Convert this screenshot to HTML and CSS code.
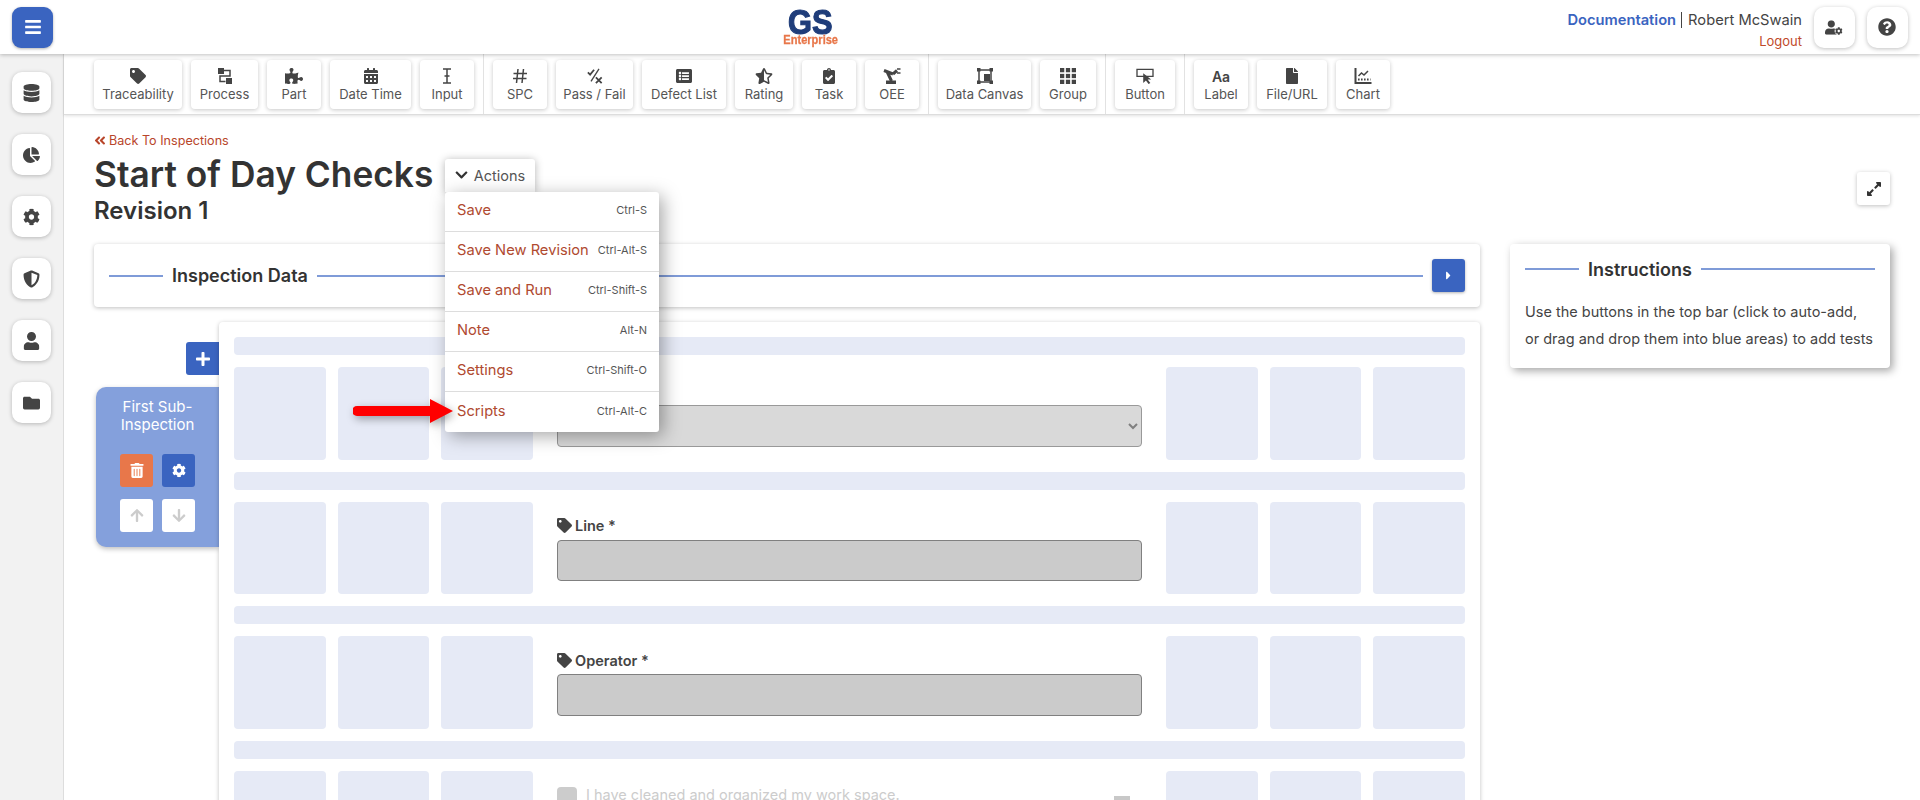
FILE: index.html
```html
<!DOCTYPE html>
<html>
  <head>
    <title>Start of Day Checks</title>
    <link rel="stylesheet" href="styles.css">
  </head>
  <body>
    <svg class="sprite" xmlns="http://www.w3.org/2000/svg">
      <symbol id="i-tag" viewBox="0 0 512 512"><path d="M0 252.118V48C0 21.49 21.49 0 48 0h204.118a48 48 0 0 1 33.941 14.059l211.882 211.882c18.745 18.745 18.745 49.137 0 67.882L293.823 497.941c-18.745 18.745-49.137 18.745-67.882 0L14.059 286.059A48 48 0 0 1 0 252.118zM112 64c-26.51 0-48 21.49-48 48s21.49 48 48 48 48-21.49 48-48-21.49-48-48-48z"/></symbol>
      <symbol id="i-cog" viewBox="0 0 512 512"><path d="M487.4 315.7l-42.6-24.6c4.3-23.2 4.3-47 0-70.2l42.6-24.6c4.9-2.8 7.1-8.6 5.5-14-11.1-35.6-30-67.8-54.7-94.6-3.8-4.1-10-5.1-14.8-2.3L380.8 110c-17.9-15.4-38.5-27.3-60.8-35.1V25.8c0-5.6-3.9-10.5-9.4-11.7-36.7-8.2-74.3-7.8-109.2 0-5.5 1.2-9.4 6.1-9.4 11.7V75c-22.2 7.9-42.8 19.8-60.8 35.1L88.7 85.5c-4.9-2.8-11-1.9-14.8 2.3-24.7 26.7-43.6 58.9-54.7 94.6-1.7 5.4.6 11.2 5.5 14L67.3 221c-4.3 23.2-4.3 47 0 70.2l-42.6 24.6c-4.9 2.8-7.1 8.6-5.5 14 11.1 35.6 30 67.8 54.7 94.6 3.8 4.1 10 5.1 14.8 2.3l42.6-24.6c17.9 15.4 38.5 27.3 60.8 35.1v49.2c0 5.6 3.9 10.5 9.4 11.7 36.7 8.2 74.3 7.8 109.2 0 5.5-1.2 9.4-6.1 9.4-11.7v-49.2c22.2-7.9 42.8-19.8 60.8-35.1l42.6 24.6c4.9 2.8 11 1.9 14.8-2.3 24.7-26.7 43.6-58.9 54.7-94.6 1.5-5.5-.7-11.3-5.6-14.1zM256 336c-44.1 0-80-35.9-80-80s35.9-80 80-80 80 35.9 80 80-35.9 80-80 80z"/></symbol>
      <symbol id="i-user" viewBox="0 0 448 512"><path d="M224 256c70.7 0 128-57.3 128-128S294.7 0 224 0 96 57.3 96 128s57.3 128 128 128zm89.6 32h-16.7c-22.2 10.2-46.9 16-72.9 16s-50.6-5.8-72.9-16h-16.7C60.2 288 0 348.2 0 422.4V464c0 26.5 21.5 48 48 48h352c26.5 0 48-21.5 48-48v-41.6c0-74.2-60.2-134.4-134.4-134.4z"/></symbol>
    </svg>

    <header class="topbar">
      <button class="menu-button">
        <svg viewBox="0 0 448 512"><path d="M16 132h416c8.837 0 16-7.163 16-16V76c0-8.837-7.163-16-16-16H16C7.163 60 0 67.163 0 76v40c0 8.837 7.163 16 16 16zm0 160h416c8.837 0 16-7.163 16-16v-40c0-8.837-7.163-16-16-16H16c-8.837 0-16 7.163-16 16v40c0 8.837 7.163 16 16 16zm0 160h416c8.837 0 16-7.163 16-16v-40c0-8.837-7.163-16-16-16H16c-8.837 0-16 7.163-16 16v40c0 8.837 7.163 16 16 16z"/></svg>
      </button>
      <div class="logo">
        <span class="logo-gs">GS</span>
        <span class="logo-sub">Enterprise</span>
      </div>
      <div class="account">
        <div class="account-text">
          <p class="account-name"><a class="doc-link">Documentation</a><span class="pipe"></span>Robert McSwain</p>
          <a class="logout">Logout</a>
        </div>
        <button class="round-button">
          <svg class="icon-usercog" viewBox="0 0 640 512"><use href="#i-user" width="448" height="512"/><g class="cog-ring"><circle cx="490" cy="380" r="150"/></g><use href="#i-cog" x="350" y="240" width="280" height="280"/></svg>
        </button>
        <button class="round-button">
          <svg class="icon-help" viewBox="0 0 512 512"><path d="M504 256c0 136.997-111.043 248-248 248S8 392.997 8 256C8 119.083 119.043 8 256 8s248 111.083 248 248zM262.655 90c-54.497 0-89.255 22.957-116.549 63.758-3.536 5.286-2.353 12.415 2.715 16.258l34.699 26.31c5.205 3.947 12.621 3.008 16.665-2.122 17.864-22.658 30.113-35.797 57.303-35.797 20.429 0 45.698 13.148 45.698 32.958 0 14.976-12.363 22.667-32.534 33.976C247.128 238.528 216 254.941 216 296v4c0 6.627 5.373 12 12 12h56c6.627 0 12-5.373 12-12v-1.333c0-28.462 83.186-29.647 83.186-106.667 0-58.002-60.165-102-116.531-102zM256 338c-25.365 0-46 20.635-46 46 0 25.364 20.635 46 46 46s46-20.636 46-46c0-25.365-20.635-46-46-46z"/></svg>
        </button>
      </div>
    </header>

    <div class="layout">
      <nav class="sidebar">
        <button class="side-button"><svg viewBox="0 0 448 512"><path d="M448 73.143v45.714C448 159.143 347.667 192 224 192S0 159.143 0 118.857V73.143C0 32.857 100.333 0 224 0s224 32.857 224 73.143zM448 176v102.857C448 319.143 347.667 352 224 352S0 319.143 0 278.857V176c48.125 33.143 136.208 48.572 224 48.572S399.874 209.143 448 176zm0 160v102.857C448 479.143 347.667 512 224 512S0 479.143 0 438.857V336c48.125 33.143 136.208 48.572 224 48.572S399.874 369.143 448 336z"/></svg></button>
        <button class="side-button"><svg viewBox="0 0 544 512"><path d="M527.79 288H290.5l158.03 158.03c6.04 6.04 15.98 6.53 22.19.68 38.7-36.46 65.32-85.61 73.13-140.86 1.34-9.46-6.51-17.85-16.06-17.85zm-15.83-64.8C503.72 103.74 408.26 8.28 288.8.04 279.68-.59 272 7.1 272 16.24V240h223.77c9.14 0 16.82-7.68 16.19-16.8zM224 288V50.71c0-9.55-8.39-17.4-17.84-16.06C86.99 51.49-4.1 155.6.14 280.37 4.5 408.51 114.83 513.59 243.03 511.98c50.4-.63 96.97-16.87 135.26-44.03 7.9-5.6 8.42-17.23 1.57-24.08L224 288z"/></svg></button>
        <button class="side-button"><svg viewBox="0 0 512 512"><use href="#i-cog"/></svg></button>
        <button class="side-button"><svg viewBox="0 0 512 512"><path d="M466.5 83.7l-192-80a48.15 48.15 0 0 0-36.9 0l-192 80C27.7 91.1 16 108.6 16 128c0 198.5 114.5 335.7 221.5 380.3 11.8 4.9 25.1 4.9 36.9 0C360.1 472.6 496 349.3 496 128c0-19.4-11.7-36.9-29.5-44.3zM256.1 446.3l-.1-381 175.9 73.3c-3.3 151.4-82.1 261.1-175.8 307.7z"/></svg></button>
        <button class="side-button"><svg viewBox="0 0 448 512"><use href="#i-user"/></svg></button>
        <button class="side-button"><svg viewBox="0 0 512 512"><path d="M464 128H272l-64-64H48C21.49 64 0 85.49 0 112v288c0 26.51 21.49 48 48 48h416c26.51 0 48-21.49 48-48V176c0-26.51-21.49-48-48-48z"/></svg></button>
      </nav>

      <main class="main">
        <div class="toolbar">
          <div class="tool-group">
            <button class="tool tool-88"><svg viewBox="0 0 512 512"><use href="#i-tag"/></svg>Traceability</button>
            <button class="tool tool-67"><svg viewBox="0 0 14 16"><rect x="0" y="0" width="6" height="6"/><rect x="8" y="10" width="6" height="6"/><path class="line" d="M6 2.5h6v5.5H2v5.5h5.5"/></svg>Process</button>
            <button class="tool tool-54"><svg viewBox="0 0 576 512"><path d="M519.442 288.651c-41.519 0-59.5 31.593-82.058 31.593C377.409 320.244 432 144 432 144s-196.288 80-196.288-3.297c0-35.827 36.288-46.25 36.288-85.985C272 19.216 243.885 0 210.539 0c-34.654 0-66.366 18.891-66.366 56.346 0 41.364 31.711 59.277 31.711 81.75C175.885 207.719 0 166.758 0 166.758v333.237s178.635 41.047 178.635-28.662c0-22.473-40-40.107-40-81.471 0-37.456 29.25-56.346 63.577-56.346 33.673 0 61.788 19.216 61.788 54.717 0 39.735-36.288 50.158-36.288 85.985 0 60.803 129.675 25.73 181.23 25.73 0 0-34.725-120.101 25.827-120.101 35.962 0 46.423 36.152 86.308 36.152C556.712 416 576 387.99 576 354.443c0-34.199-18.962-65.792-56.558-65.792z"/></svg>Part</button>
            <button class="tool tool-81"><svg viewBox="0 0 448 512"><path d="M0 464c0 26.5 21.5 48 48 48h352c26.5 0 48-21.5 48-48V192H0v272zm320-196c0-6.6 5.4-12 12-12h40c6.6 0 12 5.4 12 12v40c0 6.6-5.4 12-12 12h-40c-6.6 0-12-5.4-12-12v-40zm0 128c0-6.6 5.4-12 12-12h40c6.6 0 12 5.4 12 12v40c0 6.6-5.4 12-12 12h-40c-6.6 0-12-5.4-12-12v-40zM192 268c0-6.6 5.4-12 12-12h40c6.6 0 12 5.4 12 12v40c0 6.6-5.4 12-12 12h-40c-6.6 0-12-5.4-12-12v-40zm0 128c0-6.6 5.4-12 12-12h40c6.6 0 12 5.4 12 12v40c0 6.6-5.4 12-12 12h-40c-6.6 0-12-5.4-12-12v-40zM64 268c0-6.6 5.4-12 12-12h40c6.6 0 12 5.4 12 12v40c0 6.6-5.4 12-12 12H76c-6.6 0-12-5.4-12-12v-40zm0 128c0-6.6 5.4-12 12-12h40c6.6 0 12 5.4 12 12v40c0 6.6-5.4 12-12 12H76c-6.6 0-12-5.4-12-12v-40zM400 64h-48V16c0-8.8-7.2-16-16-16h-32c-8.8 0-16 7.2-16 16v48H160V16c0-8.8-7.2-16-16-16h-32c-8.8 0-16 7.2-16 16v48H48C21.5 64 0 85.5 0 112v48h448v-48c0-26.5-21.5-48-48-48z"/></svg>Date Time</button>
            <button class="tool tool-54"><svg viewBox="0 0 14 16"><path class="line" d="M3 1h8M3 15h8M7 1v14M4.5 8h5"/></svg>Input</button>
          </div>
          <div class="tool-group">
            <button class="tool tool-54"><svg viewBox="0 0 16 16"><path class="line" d="M6 1L4.5 15M11.5 1L10 15M1.5 5.5H15M1 10.5H14.5"/></svg>SPC</button>
            <button class="tool tool-77"><svg viewBox="0 0 18 18"><path class="line-bold" d="M1 5l2.5 2.5L8 2M10 10.5l6.5 6.5M16.5 10.5L10 17"/><path class="line" d="M13.5 1L4.5 15"/></svg>Pass / Fail</button>
            <button class="tool tool-84"><svg viewBox="0 0 512 512"><path d="M464 480H48c-26.51 0-48-21.49-48-48V80c0-26.51 21.49-48 48-48h416c26.51 0 48 21.49 48 48v352c0 26.51-21.49 48-48 48zM128 120c-22.091 0-40 17.909-40 40s17.909 40 40 40 40-17.909 40-40-17.909-40-40-40zm0 96c-22.091 0-40 17.909-40 40s17.909 40 40 40 40-17.909 40-40-17.909-40-40-40zm0 96c-22.091 0-40 17.909-40 40s17.909 40 40 40 40-17.909 40-40-17.909-40-40-40zm288-136v-32c0-6.627-5.373-12-12-12H204c-6.627 0-12 5.373-12 12v32c0 6.627 5.373 12 12 12h200c6.627 0 12-5.373 12-12zm0 96v-32c0-6.627-5.373-12-12-12H204c-6.627 0-12 5.373-12 12v32c0 6.627 5.373 12 12 12h200c6.627 0 12-5.373 12-12zm0 96v-32c0-6.627-5.373-12-12-12H204c-6.627 0-12 5.373-12 12v32c0 6.627 5.373 12 12 12h200c6.627 0 12-5.373 12-12z"/></svg>Defect List</button>
            <button class="tool tool-58"><svg viewBox="0 0 536 512"><path d="M508.55 171.51L362.18 150.2 296.77 17.81C290.89 5.98 279.42 0 267.95 0c-11.4 0-22.79 5.9-28.69 17.81l-65.43 132.38-146.38 21.29c-26.25 3.8-36.77 36.09-17.74 54.59l105.89 103-25.06 145.48C86.98 495.33 103.57 512 122.15 512c4.93 0 10-1.17 14.87-3.75l130.95-68.68 130.94 68.7c4.86 2.55 9.92 3.71 14.83 3.71 18.6 0 35.22-16.61 31.66-37.4l-25.03-145.49 105.91-102.98c19.04-18.5 8.52-50.8-17.73-54.6zm-121.74 123.2l-18.12 17.62 4.28 24.88 19.52 113.45-102.13-53.59-22.38-11.74.03-317.19 51.03 103.29 11.18 22.63 25.01 3.64 114.23 16.63-82.65 80.38z"/></svg>Rating</button>
            <button class="tool tool-54"><svg viewBox="0 0 384 512"><path d="M336 64h-80c0-35.3-28.7-64-64-64s-64 28.7-64 64H48C21.5 64 0 85.5 0 112v352c0 26.5 21.5 48 48 48h288c26.5 0 48-21.5 48-48V112c0-26.5-21.5-48-48-48zM192 40c13.3 0 24 10.7 24 24s-10.7 24-24 24-24-10.7-24-24 10.7-24 24-24zm121.2 231.8l-143 141.8c-4.7 4.7-12.3 4.6-17-.1l-82.6-83.3c-4.7-4.7-4.6-12.3.1-17L99.1 285c4.7-4.7 12.3-4.6 17 .1l46 46.4 106-105.2c4.7-4.7 12.3-4.6 17 .1l28.2 28.4c4.7 4.8 4.6 12.3-.1 17z"/></svg>Task</button>
            <button class="tool tool-54"><svg viewBox="0 0 18 16"><rect x="3" y="12.5" width="10" height="3.5"/><path class="line-heavy" d="M1 2.5L10 6M4 3.5L8.5 13M10 6l4-3.5"/><path class="line" d="M14 1h3.5M14 5h3.5"/></svg>OEE</button>
          </div>
          <div class="tool-group">
            <button class="tool tool-93"><svg viewBox="0 0 16 16"><path class="line" d="M2 2h12v12H2z"/><rect x="0" y="0" width="3.5" height="3.5"/><rect x="12.5" y="0" width="3.5" height="3.5"/><rect x="0" y="12.5" width="3.5" height="3.5"/><rect x="12.5" y="12.5" width="3.5" height="3.5"/><rect x="7" y="6" width="6" height="7"/></svg>Data Canvas</button>
            <button class="tool tool-56"><svg viewBox="0 0 15 15"><rect x="0" y="0" width="4" height="4"/><rect x="5.5" y="0" width="4" height="4"/><rect x="11" y="0" width="4" height="4"/><rect x="0" y="5.5" width="4" height="4"/><rect x="5.5" y="5.5" width="4" height="4"/><rect x="11" y="5.5" width="4" height="4"/><rect x="0" y="11" width="4" height="4"/><rect x="5.5" y="11" width="4" height="4"/><rect x="11" y="11" width="4" height="4"/></svg>Group</button>
          </div>
          <div class="tool-group">
            <button class="tool tool-60"><svg viewBox="0 0 20 18"><path class="line" d="M1 1.5h18v8H1z"/><path d="M8 6v11l3-3 3 4 2-1-3-4h4z"/></svg>Button</button>
          </div>
          <div class="tool-group">
            <button class="tool tool-54"><span class="aa">Aa</span>Label</button>
            <button class="tool tool-70"><svg viewBox="0 0 384 512"><path d="M224 136V0H24C10.7 0 0 10.7 0 24v464c0 13.3 10.7 24 24 24h336c13.3 0 24-10.7 24-24V160H248c-13.2 0-24-10.8-24-24zm160-14.1v6.1H256V0h6.1c6.4 0 12.5 2.5 17 7l97.9 98c4.5 4.5 7 10.6 7 16.9z"/></svg>File/URL</button>
            <button class="tool tool-54"><svg viewBox="0 0 17 16"><path class="line-bold" d="M1 0v15h16"/><path class="line" d="M4 8l3-3 2.5 2 4-4"/><path class="line-dots" d="M3.5 11.5H16"/></svg>Chart</button>
          </div>
        </div>

        <div class="content">
          <div class="page-head">
            <div>
              <a class="back-link"><svg viewBox="0 0 448 512"><path d="M223.7 239l136-136c9.4-9.4 24.6-9.4 33.9 0l22.6 22.6c9.4 9.4 9.4 24.6 0 33.9L319.9 256l96.4 96.4c9.4 9.4 9.4 24.6 0 33.9L393.7 409c-9.4 9.4-24.6 9.4-33.9 0l-136-136c-9.5-9.4-9.5-24.6-.1-34zm-192 34l136 136c9.4 9.4 24.6 9.4 33.9 0l22.6-22.6c9.4-9.4 9.4-24.6 0-33.9L127.9 256l96.4-96.4c9.4-9.4 9.4-24.6 0-33.9L201.7 103c-9.4-9.4-24.6-9.4-33.9 0l-136 136c-9.5 9.4-9.5 24.6-.1 34z"/></svg>Back To Inspections</a>
              <div class="title-row">
                <h1>Start of Day Checks</h1>
                <div class="actions">
                  <button class="actions-button"><svg viewBox="0 0 448 512"><path d="M207.029 381.476L12.686 187.132c-9.373-9.373-9.373-24.569 0-33.941l22.667-22.667c9.357-9.357 24.522-9.375 33.901-.04L224 284.505l154.745-154.021c9.379-9.335 24.544-9.317 33.901.04l22.667 22.667c9.373 9.373 9.373 24.569 0 33.941L240.971 381.476c-9.373 9.372-24.569 9.372-33.942 0z"/></svg>Actions</button>
                  <ul class="actions-menu">
                    <li><span>Save</span><small>Ctrl-S</small></li>
                    <li><span>Save New Revision</span><small>Ctrl-Alt-S</small></li>
                    <li><span>Save and Run</span><small>Ctrl-Shift-S</small></li>
                    <li><span>Note</span><small>Alt-N</small></li>
                    <li><span>Settings</span><small>Ctrl-Shift-O</small></li>
                    <li><span>Scripts</span><small>Ctrl-Alt-C</small></li>
                  </ul>
                </div>
              </div>
              <h2>Revision 1</h2>
            </div>
            <button class="expand-button"><svg viewBox="0 0 448 512"><path d="M212.686 315.314L120 408l32.922 31.029c15.12 15.12 4.412 40.971-16.97 40.971h-112C10.697 480 0 469.255 0 456V344c0-21.382 25.803-32.09 40.922-16.971L72 360l92.686-92.686c6.248-6.248 16.379-6.248 22.627 0l25.373 25.373c6.249 6.248 6.249 16.378 0 22.627zm22.628-118.628L328 104l-32.922-31.029C279.958 57.851 290.666 32 312.048 32h112C437.303 32 448 42.745 448 56v112c0 21.382-25.803 32.09-40.922 16.971L376 152l-92.686 92.686c-6.248 6.248-16.379 6.248-22.627 0l-25.373-25.373c-6.249-6.248-6.249-16.378 0-22.627z"/></svg></button>
          </div>

          <div class="columns">
            <div>
              <section class="card data-card">
                <div class="rule-title"><span>Inspection Data</span></div>
                <button class="next-button"><svg viewBox="0 0 192 512"><path d="M0 384.662V127.338c0-17.818 21.543-26.741 34.142-14.142l128.662 128.662c7.81 7.81 7.81 20.474 0 28.284L34.142 398.804C21.543 411.404 0 402.48 0 384.662z"/></svg></button>
              </section>

              <div class="builder">
                <aside class="sub-tabs">
                  <button class="add-tab"><svg viewBox="0 0 448 512"><path d="M416 208H272V64c0-17.67-14.33-32-32-32h-32c-17.67 0-32 14.33-32 32v144H32c-17.67 0-32 14.33-32 32v32c0 17.67 14.33 32 32 32h144v144c0 17.67 14.33 32 32 32h32c17.67 0 32-14.33 32-32V304h144c17.67 0 32-14.33 32-32v-32c0-17.67-14.33-32-32-32z"/></svg></button>
                  <div class="sub-tile">
                    <p>First Sub-<br>Inspection</p>
                    <div class="tile-buttons">
                      <button class="tile-button orange"><svg viewBox="0 0 448 512"><path d="M32 464a48 48 0 0 0 48 48h288a48 48 0 0 0 48-48V128H32zm272-256a16 16 0 0 1 32 0v224a16 16 0 0 1-32 0zm-96 0a16 16 0 0 1 32 0v224a16 16 0 0 1-32 0zm-96 0a16 16 0 0 1 32 0v224a16 16 0 0 1-32 0zM432 32H312l-9.4-18.7A24 24 0 0 0 281.1 0H166.8a23.72 23.72 0 0 0-21.4 13.3L136 32H16A16 16 0 0 0 0 48v32a16 16 0 0 0 16 16h416a16 16 0 0 0 16-16V48a16 16 0 0 0-16-16z"/></svg></button>
                      <button class="tile-button blue"><svg viewBox="0 0 512 512"><use href="#i-cog"/></svg></button>
                      <button class="tile-button plain"><svg viewBox="0 0 448 512"><path d="M34.9 289.5l-22.2-22.2c-9.4-9.4-9.4-24.6 0-33.9L207 39c9.4-9.4 24.6-9.4 33.9 0l194.3 194.3c9.4 9.4 9.4 24.6 0 33.9L413 289.4c-9.5 9.5-25 9.3-34.3-.4L264 168.6V456c0 13.3-10.7 24-24 24h-32c-13.3 0-24-10.7-24-24V168.6L69.2 289.1c-9.3 9.8-24.8 10-34.3.4z"/></svg></button>
                      <button class="tile-button plain"><svg viewBox="0 0 448 512"><path d="M413.1 222.5l22.2 22.2c9.4 9.4 9.4 24.6 0 33.9L241 473c-9.4 9.4-24.6 9.4-33.9 0L12.7 278.6c-9.4-9.4-9.4-24.6 0-33.9l22.2-22.2c9.5-9.5 25-9.3 34.3.4L184 343.4V56c0-13.3 10.7-24 24-24h32c13.3 0 24 10.7 24 24v287.4l114.8-120.5c9.3-9.8 24.8-10 34.3-.4z"/></svg></button>
                    </div>
                  </div>
                </aside>

                <section class="card canvas">
                  <div class="strip"></div>
                  <div class="zone-row">
                    <div class="zone"></div><div class="zone"></div><div class="zone"></div>
                    <div class="field">
                      <label><svg viewBox="0 0 512 512"><use href="#i-tag"/></svg>Part *</label>
                      <select class="field-select" disabled><option></option></select>
                    </div>
                    <div class="zone"></div><div class="zone"></div><div class="zone"></div>
                  </div>
                  <div class="strip"></div>
                  <div class="zone-row">
                    <div class="zone"></div><div class="zone"></div><div class="zone"></div>
                    <div class="field">
                      <label><svg viewBox="0 0 512 512"><use href="#i-tag"/></svg>Line *</label>
                      <input class="field-input" type="text" disabled>
                    </div>
                    <div class="zone"></div><div class="zone"></div><div class="zone"></div>
                  </div>
                  <div class="strip"></div>
                  <div class="zone-row">
                    <div class="zone"></div><div class="zone"></div><div class="zone"></div>
                    <div class="field">
                      <label><svg viewBox="0 0 512 512"><use href="#i-tag"/></svg>Operator *</label>
                      <input class="field-input" type="text" disabled>
                    </div>
                    <div class="zone"></div><div class="zone"></div><div class="zone"></div>
                  </div>
                  <div class="strip"></div>
                  <div class="zone-row">
                    <div class="zone"></div><div class="zone"></div><div class="zone"></div>
                    <div class="field">
                      <div class="check-row">
                        <span class="check-box"></span>
                        <span class="check-text">I have cleaned and organized my work space.</span>
                        <span class="check-mark"></span>
                      </div>
                    </div>
                    <div class="zone"></div><div class="zone"></div><div class="zone"></div>
                  </div>
                </section>
              </div>
            </div>

            <aside class="card instructions">
              <div class="rule-title"><span>Instructions</span></div>
              <p>Use the buttons in the top bar (click to auto-add,<br>or drag and drop them into blue areas) to add tests</p>
            </aside>
          </div>
        </div>
      </main>
    </div>

    <!-- red arrow pointing at the Scripts entry -->
    <svg class="callout" viewBox="0 0 100 24"><path d="M4 7h73V0l23 12-23 12v-7H4a5 5 0 0 1 0-10z"/></svg>
  </body>
</html>
```

FILE: styles.css
```css
* {
  box-sizing: border-box;
}

html,
body {
  height: 800px;
  overflow: hidden;
}

body {
  margin: 0;
  background-color: #fff;
  color: #333;
  font-family: Inter, "Liberation Sans", sans-serif;
}

button {
  font-family: inherit;
  border: none;
  padding: 0;
  cursor: pointer;
}

svg {
  fill: currentColor;
  display: block;
}

p,
h1,
h2,
ul {
  margin: 0;
  padding: 0;
}

.sprite {
  display: none;
}

/* Top bar */
.topbar {
  position: relative;
  z-index: 3;
  height: 54px;
  display: flex;
  align-items: center;
  justify-content: space-between;
  padding: 0 12px;
  background-color: #fff;
  box-shadow: 0 1px 4px rgba(0, 0, 0, 0.25);
}

.menu-button {
  width: 41px;
  height: 41px;
  display: flex;
  align-items: center;
  justify-content: center;
  border-radius: 9px;
  background-color: #3a64c0;
  color: #fff;
  box-shadow: 0 1px 3px rgba(0, 0, 0, 0.3);
}

.menu-button svg {
  width: 16px;
  height: 18px;
}

.logo {
  width: 54px;
  display: flex;
  flex-direction: column;
  align-items: center;
  margin-top: -1px;
}

.logo-gs {
  font-family: "Liberation Sans", sans-serif;
  font-weight: 700;
  font-size: 35px;
  line-height: 27px;
  color: #1f3d7a;
  transform: scaleX(0.88);
  -webkit-text-stroke: 1.2px #1f3d7a;
}

.logo-sub {
  font-family: "Liberation Sans", sans-serif;
  font-weight: 700;
  font-size: 12px;
  line-height: 11px;
  color: #e8774a;
  white-space: nowrap;
  transform: scaleX(0.92);
  -webkit-text-stroke: 0.3px #e8774a;
}

.account {
  display: flex;
  align-items: center;
  gap: 12px;
}

.account-text {
  padding-top: 5px;
  text-align: right;
  font-size: 14.7px;
}

.account-name {
  line-height: 20px;
  color: #444;
  white-space: nowrap;
}

.doc-link {
  color: #3a64c0;
  font-weight: 600;
}

.pipe {
  display: inline-block;
  width: 1px;
  height: 16px;
  margin: 0 6px 0 5px;
  background-color: #444;
  vertical-align: -3px;
}

.logout {
  display: block;
  margin-top: 2px;
  line-height: 18px;
  font-size: 13px;
  color: #bf4a2a;
}

.round-button {
  width: 41px;
  height: 41px;
  display: flex;
  align-items: center;
  justify-content: center;
  border-radius: 10px;
  background-color: #fff;
  color: #444;
  box-shadow: 0 1px 4px rgba(0, 0, 0, 0.25);
}

.icon-usercog {
  width: 18px;
  height: 15px;
}

.cog-ring {
  fill: #fff;
}

.icon-help {
  width: 18px;
  height: 18px;
}

/* Page frame */
.layout {
  display: flex;
  height: 746px;
}

.sidebar {
  width: 64px;
  flex: none;
  display: flex;
  flex-direction: column;
  gap: 21px;
  padding: 18px 0 0 12px;
  background-color: #f2f2f2;
  border-right: 1px solid #ddd;
}

.side-button {
  width: 39px;
  height: 41px;
  display: flex;
  align-items: center;
  justify-content: center;
  border-radius: 10px;
  background-color: #fff;
  color: #444;
  box-shadow: 0 1px 4px rgba(0, 0, 0, 0.25);
}

.side-button svg {
  width: 17px;
  height: 18px;
}

.main {
  flex: 1;
  min-width: 0;
}

/* Test toolbar */
.toolbar {
  position: relative;
  z-index: 2;
  height: 61px;
  display: flex;
  padding-left: 30px;
  background-color: #fff;
  border-bottom: 1px solid #ddd;
  box-shadow: 0 1px 3px rgba(0, 0, 0, 0.12);
}

.tool-group {
  display: flex;
  gap: 9px;
  padding: 6px 9px 0;
  border-right: 1px solid #e2e2e2;
}

.tool-group:first-child {
  padding-left: 0;
}

.tool-group:last-child {
  border-right: none;
}

.tool {
  height: 49px;
  display: flex;
  flex-direction: column;
  align-items: center;
  padding-top: 8px;
  border-radius: 4px;
  background-color: #fff;
  color: #555;
  font-size: 13px;
  line-height: 18px;
  white-space: nowrap;
  box-shadow: 0 1px 4px rgba(0, 0, 0, 0.22);
}

.tool svg {
  height: 16px;
  width: 18px;
  margin-bottom: 1px;
  color: #444;
}

.tool-54 { width: 54px; }
.tool-56 { width: 56px; }
.tool-58 { width: 58px; }
.tool-60 { width: 60px; }
.tool-67 { width: 67px; }
.tool-70 { width: 70px; }
.tool-77 { width: 77px; }
.tool-81 { width: 81px; }
.tool-84 { width: 84px; }
.tool-88 { width: 88px; }
.tool-93 { width: 93px; }

.line,
.line-bold,
.line-heavy,
.line-dots {
  fill: none;
  stroke: currentColor;
  stroke-width: 1.5;
}

.line-bold {
  stroke-width: 2;
}

.line-heavy {
  stroke-width: 3;
}

.line-dots {
  stroke-width: 1.8;
  stroke-dasharray: 1.6 1.4;
}

.aa {
  height: 17px;
  font-size: 14px;
  font-weight: 600;
  line-height: 17px;
  color: #444;
}

/* Page content */
.content {
  padding: 17px 30px 0;
}

.page-head {
  display: flex;
  justify-content: space-between;
  align-items: flex-start;
}

.back-link {
  display: flex;
  align-items: center;
  gap: 3px;
  height: 16px;
  font-size: 12.6px;
  color: #b8452a;
}

.back-link svg {
  width: 12px;
  height: 13px;
}

.title-row {
  display: flex;
  align-items: center;
  gap: 13px;
  height: 40px;
  margin-top: 7px;
}

h1 {
  width: 338px;
  font-size: 35.3px;
  font-weight: 600;
  line-height: 40px;
  color: #333;
  white-space: nowrap;
}

h2 {
  font-size: 24px;
  font-weight: 600;
  line-height: 28px;
  margin-top: 2px;
  color: #333;
}

.actions {
  position: relative;
}

.actions-button {
  width: 90px;
  height: 33px;
  display: flex;
  align-items: center;
  justify-content: center;
  gap: 6px;
  border-radius: 3px 3px 0 0;
  background-color: #fff;
  color: #555;
  font-size: 14.5px;
  box-shadow: 0 1px 8px rgba(0, 0, 0, 0.3);
}

.actions-button svg {
  width: 13px;
  height: 14px;
  color: #333;
}

.actions-menu {
  position: absolute;
  z-index: 5;
  left: 0;
  top: 33px;
  width: 214px;
  list-style-type: none;
  background-color: #fff;
  border-radius: 3px;
  box-shadow: 4px 4px 18px rgba(0, 0, 0, 0.35);
}

.actions-menu li {
  height: 40px;
  display: flex;
  align-items: center;
  justify-content: space-between;
  padding: 0 12px 2px;
  border-bottom: 1px solid #ddd;
  color: #b04a30;
  font-size: 14.7px;
  white-space: nowrap;
}

.actions-menu li:last-child {
  border-bottom: none;
}

.actions-menu small {
  color: #555;
  font-size: 11px;
}

.expand-button {
  width: 33px;
  height: 33px;
  margin-top: 40px;
  display: flex;
  align-items: center;
  justify-content: center;
  border-radius: 3px;
  background-color: #fff;
  color: #333;
  box-shadow: 0 1px 4px rgba(0, 0, 0, 0.25);
}

.expand-button svg {
  width: 14px;
  height: 16px;
}

.columns {
  display: grid;
  grid-template-columns: 1386px 380px;
  column-gap: 30px;
  margin-top: 19px;
}

.card {
  background-color: #fff;
  border-radius: 4px;
  box-shadow: 0 1px 4px rgba(0, 0, 0, 0.25);
}

.data-card {
  height: 63px;
  display: flex;
  align-items: center;
  gap: 9px;
  padding: 0 15px;
}

/* Heading with a blue rule each side */
.rule-title {
  flex: 1;
  display: flex;
  align-items: center;
  font-size: 18px;
  font-weight: 600;
  color: #333;
}

.rule-title::before,
.rule-title::after {
  content: "";
  height: 2px;
  background-color: #7f9bd8;
}

.rule-title::before {
  width: 54px;
  margin-right: 9px;
}

.rule-title::after {
  flex: 1;
  margin-left: 9px;
}

.next-button {
  width: 33px;
  height: 33px;
  display: flex;
  align-items: center;
  justify-content: center;
  border-radius: 3px;
  background-color: #3a64c0;
  color: #fff;
  box-shadow: 0 1px 3px rgba(0, 0, 0, 0.3);
}

.next-button svg {
  width: 5px;
  height: 13px;
}

.builder {
  display: flex;
  margin-top: 15px;
}

.sub-tabs {
  width: 125px;
  flex: none;
  display: flex;
  flex-direction: column;
  align-items: flex-end;
  padding-top: 20px;
}

.add-tab {
  width: 33px;
  height: 33px;
  display: flex;
  align-items: center;
  justify-content: center;
  border-radius: 3px 0 0 3px;
  background-color: #3a64c0;
  color: #fff;
}

.add-tab svg {
  width: 14px;
  height: 16px;
}

.sub-tile {
  width: 123px;
  height: 160px;
  margin-top: 12px;
  padding-top: 11px;
  border-radius: 10px 0 0 10px;
  background-color: #84a0dc;
  color: #fff;
  text-align: center;
  box-shadow: 0 2px 5px rgba(0, 0, 0, 0.25);
}

.sub-tile p {
  font-size: 15px;
  line-height: 18px;
  height: 56px;
}

.tile-buttons {
  display: grid;
  grid-template-columns: 33px 33px;
  justify-content: center;
  gap: 12px 9px;
}

.tile-button {
  width: 33px;
  height: 33px;
  display: flex;
  align-items: center;
  justify-content: center;
  border-radius: 3px;
}

.tile-button svg {
  width: 14px;
  height: 15px;
}

.orange {
  background-color: #e8774a;
  color: #fff;
}

.blue {
  background-color: #3a64c0;
  color: #fff;
}

.plain {
  background-color: #fff;
  color: #ccc;
}

.canvas {
  flex: 1;
  height: 520px;
  display: flex;
  flex-direction: column;
  gap: 12px;
  padding: 15px;
}

.strip {
  height: 18px;
  flex: none;
  background-color: #e6eaf6;
  border-radius: 4px;
}

.zone-row {
  height: 92.67px;
  flex: none;
  display: grid;
  grid-template-columns: 92px 91px 92px 1fr 92px 91px 92px;
  column-gap: 12px;
}

.zone {
  background-color: #e6eaf6;
  border-radius: 4px;
}

.field {
  padding: 15px 12px 0;
}

.field label {
  display: flex;
  align-items: center;
  gap: 3px;
  height: 18px;
  margin-bottom: 5px;
  font-size: 14.5px;
  font-weight: 600;
  color: #444;
}

.field label svg {
  width: 15px;
  height: 15px;
}

.field-input,
.field-select {
  display: block;
  width: 100%;
  height: 41.5px;
  border: 1px solid #808080;
  border-radius: 4px;
  background-color: #cbcbcb;
}

.field-select {
  background-color: #d9d9d9;
  border-color: #999;
  opacity: 1;
}

.check-row {
  display: flex;
  align-items: flex-start;
  padding-top: 1px;
}

.check-box {
  width: 20px;
  height: 20px;
  border-radius: 4px;
  background-color: #ccc;
}

.check-text {
  flex: 1;
  margin-left: 9px;
  font-size: 14.5px;
  line-height: 16px;
  color: #ccc;
}

.check-mark {
  width: 16px;
  height: 16px;
  margin: 9px 12px 0 0;
  background-color: #c8c8c8;
}

.instructions {
  height: 124px;
  padding: 14px 15px 15px;
  box-shadow: 3px 3px 8px rgba(0, 0, 0, 0.35);
}

.instructions .rule-title {
  flex: none;
  height: 22px;
}

.instructions p {
  margin-top: 18px;
  font-size: 14.5px;
  line-height: 27px;
  white-space: nowrap;
  color: #444;
}

.callout {
  position: absolute;
  z-index: 6;
  left: 353px;
  top: 399px;
  width: 100px;
  height: 24px;
  fill: #f00;
  filter: drop-shadow(2px 3px 4px rgba(0, 0, 0, 0.35));
}
```
